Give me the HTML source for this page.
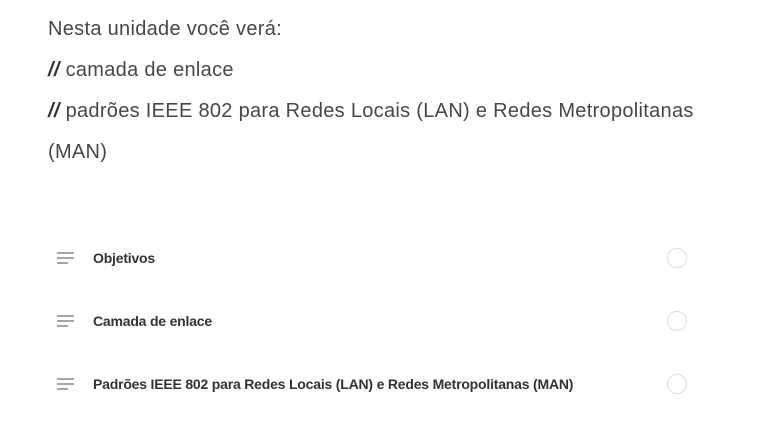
<!DOCTYPE html>
<html><head><meta charset="utf-8"><style>
body{margin:0;width:775px;height:445px;background:#fff;font-family:"Liberation Sans",sans-serif;overflow:hidden;position:relative}
.t{position:absolute;left:48px;width:660px;font-size:20px;letter-spacing:0.3px;color:#474747;line-height:41px;top:9px}
.t b{font-weight:bold;color:#333;font-style:italic}
.row{position:absolute;left:0;width:775px;height:30px}
.ic{position:absolute;left:56px;top:-8px}
.lb{position:absolute;left:93px;top:-8px;font-size:14px;font-weight:bold;color:#333;letter-spacing:-0.2px;white-space:nowrap}
.c{position:absolute;left:667px;top:-10px;width:18px;height:18px;border:1.5px solid #ddd;border-radius:50%}
</style></head><body>
<div class="t">Nesta unidade você verá:<br><b>//</b> camada de enlace<br><b>//</b> padrões IEEE 802 para Redes Locais (LAN) e Redes Metropolitanas (MAN)</div>
<div class="row" style="top:258px"><svg class="ic" width="20" height="16"><path d="M1 3H18M1 8H18M1 13H12" stroke="#888" stroke-width="1.6"/></svg><div class="lb">Objetivos</div><div class="c"></div></div>
<div class="row" style="top:321px"><svg class="ic" width="20" height="16"><path d="M1 3H18M1 8H18M1 13H12" stroke="#888" stroke-width="1.6"/></svg><div class="lb">Camada de enlace</div><div class="c"></div></div>
<div class="row" style="top:384px"><svg class="ic" width="20" height="16"><path d="M1 3H18M1 8H18M1 13H12" stroke="#888" stroke-width="1.6"/></svg><div class="lb">Padrões IEEE 802 para Redes Locais (LAN) e Redes Metropolitanas (MAN)</div><div class="c"></div></div>
</body></html>
